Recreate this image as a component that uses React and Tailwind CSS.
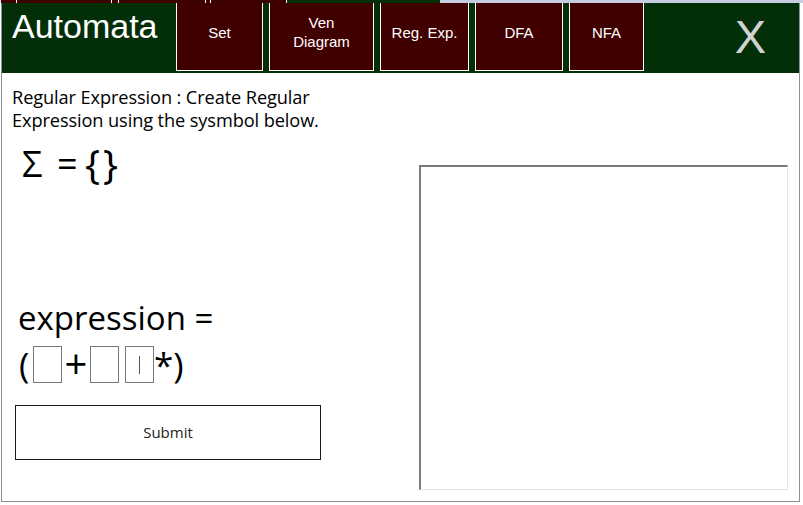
import React, { useState } from 'react'

const tabs = [
  { label: 'Set', w: 'w-[87px]' },
  { label: 'Ven\nDiagram', w: 'w-[105px]' },
  { label: 'Reg. Exp.', w: 'w-[89px]' },
  { label: 'DFA', w: 'w-[88px]' },
  { label: 'NFA', w: 'w-[75px]' },
]

function SlotBox({ caret }) {
  return (
    <span className="inline-flex w-[29px] h-[37px] border border-[#7a7a7a] bg-white items-center justify-center">
      {caret && <span className="block w-px h-[18px] bg-[#555]" />}
    </span>
  )
}

export default function App() {
  const [active] = useState('Reg. Exp.')

  return (
    <div className="w-[803px] h-[505px] bg-white overflow-hidden font-['Open_Sans',sans-serif]">
      {/* windows behind, peeking over the top */}
      <div className="flex h-[3px]">
        <div className="w-[1px] bg-[#e8e8e8]" />
        <div className="w-[15px] bg-[#3d0000]" />
        <div className="w-[1px] bg-white" />
        <div className="w-[94px] bg-[#3d0000]" />
        <div className="w-[1px] bg-white" />
        <div className="w-[6px] bg-[#3d0000]" />
        <div className="w-[1px] bg-white" />
        <div className="w-[86px] bg-[#3d0000]" />
        <div className="w-[1px] bg-white" />
        <div className="w-[4px] bg-[#3d0000]" />
        <div className="w-[1px] bg-white" />
        <div className="w-[75px] bg-[#3d0000]" />
        <div className="w-[1px] bg-white" />
        <div className="w-[153px] bg-[#022f08]" />
        <div className="flex-1 bg-[#c6cde0]" />
      </div>

      <div className="ml-px w-[799px] h-[499px] border-l border-r border-b border-[#8b9099] flex flex-col">
        {/* header */}
        <div className="h-[70px] bg-[#022f08] flex shrink-0">
          <div className="w-[174px] pl-[10px] pt-[1px] text-white text-[34px] leading-[44px] font-['Liberation_Sans',sans-serif]">
            Automata
          </div>
          <div className="flex gap-[6px] h-[68px]">
            {tabs.map((t) => (
              <div
                key={t.label}
                className={`${t.w} h-full bg-[#400000] border-x border-b border-white flex items-center justify-center pb-[9px] text-center whitespace-pre-line text-white text-[15px] leading-[19px] font-['Liberation_Sans',sans-serif] ${active === t.label ? '' : ''}`}
              >
                {t.label}
              </div>
            ))}
          </div>
          <div className="flex-1 flex items-center justify-end pr-[33px] pb-[2px] text-[#d2d2d2] text-[47px] font-['Liberation_Sans',sans-serif]">
            X
          </div>
        </div>

        {/* body */}
        <div className="flex flex-1 bg-white">
          <div className="w-[417px] flex flex-col text-black">
            <div className="pl-[10px] pt-[13px] text-[18.2px] leading-[23px] tracking-[-0.1px]">
              Regular Expression : Create Regular
              <br />
              Expression using the sysmbol below.
            </div>
            <div className="pl-[20px] flex items-center h-[44px] mt-[10px] text-[36px] leading-[44px]">
              <span className="w-[35px]">Σ</span>
              <span className="w-[28px]">=</span>
              <span className="text-[40px] tracking-[3px]">{'{}'}</span>
            </div>

            <div className="pl-[16px] mt-[113px] text-[33px] leading-[38px]">expression =</div>
            <div className="pl-[16px] mt-[9px] flex items-center h-[37px] text-[33px] leading-[37px]">
              <span className="w-[15px] pl-[1px] text-[35px]">(</span>
              <SlotBox />
              <span className="w-[28px] text-center text-[40px] pb-[3px]">+</span>
              <SlotBox />
              <span className="w-[6px]" />
              <SlotBox caret />
              <span className="text-[35px]">*)</span>
            </div>

            <button className="ml-[13px] mt-[22px] w-[306px] h-[55px] border border-[#1a1a1a] bg-white text-[15px] font-normal text-[#222]">
              Submit
            </button>
          </div>

          <div className="pt-[92px]">
            <div className="w-[369px] h-[325px] border-l-2 border-t-2 border-r border-b border-l-[#7b7b7b] border-t-[#7b7b7b] border-r-[#e3e3e3] border-b-[#e3e3e3] bg-white" />
          </div>
        </div>
      </div>
    </div>
  )
}
